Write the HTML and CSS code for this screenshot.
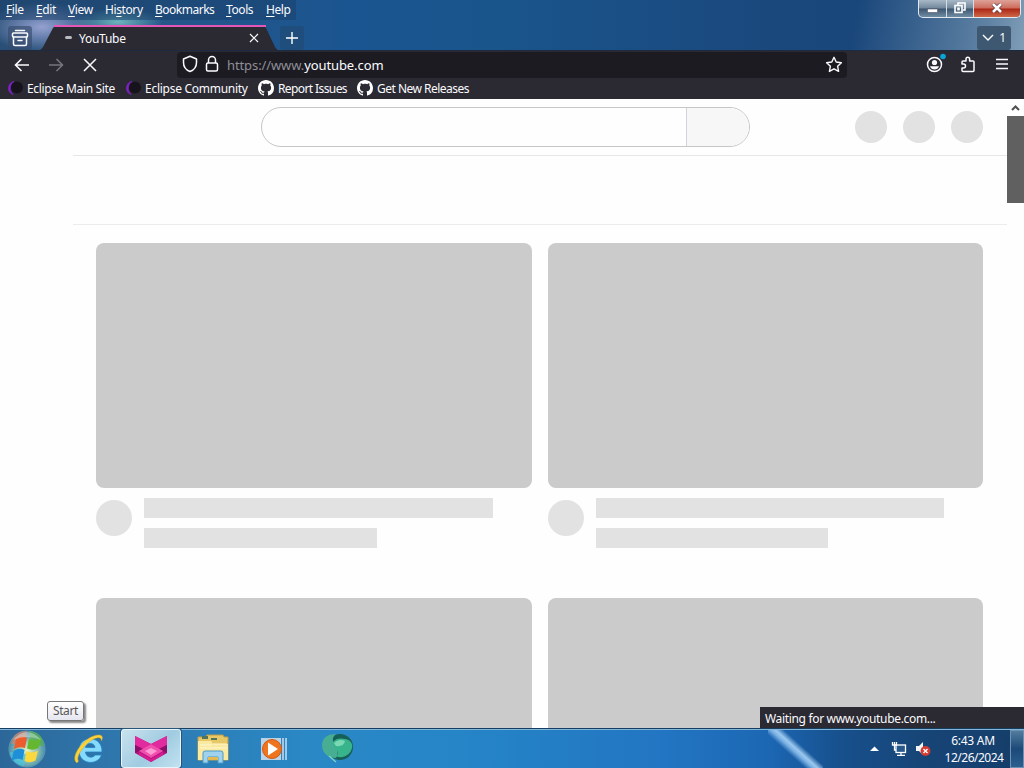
FILE: index.html
```html
<!DOCTYPE html>
<html lang="en">
<head>
<meta charset="UTF-8">
<title>YouTube</title>
<link rel="stylesheet" href="styles.css">
</head>
<body>

<!-- shared icons -->
<svg width="0" height="0" class="defs">
	<symbol id="github" viewBox="0 0 16 16"><path fill="#fff" d="M8 0C3.58 0 0 3.58 0 8c0 3.54 2.29 6.53 5.47 7.59.4.07.55-.17.55-.38 0-.19-.01-.82-.01-1.49-2.01.37-2.53-.49-2.69-.94-.09-.23-.48-.94-.82-1.13-.28-.15-.68-.52-.01-.53.63-.01 1.08.58 1.23.82.72 1.21 1.87.87 2.33.66.07-.52.28-.87.51-1.07-1.78-.2-3.64-.89-3.64-3.95 0-.87.31-1.59.82-2.15-.08-.2-.36-1.02.08-2.12 0 0 .67-.21 2.2.82.64-.18 1.32-.27 2-.27s1.36.09 2 .27c1.53-1.04 2.2-.82 2.2-.82.44 1.1.16 1.92.08 2.12.51.56.82 1.27.82 2.15 0 3.07-1.87 3.75-3.65 3.95.29.25.54.73.54 1.48 0 1.07-.01 1.93-.01 2.2 0 .21.15.46.55.38A8 8 0 0 0 16 8c0-4.42-3.58-8-8-8z"/></symbol>
	<symbol id="eclipse" viewBox="0 0 16 16"><path d="M7 1.500A6.800 6.800 0 0 0 6 14.500 8 8 0 0 1 7 1.500z" fill="#8a22cf" stroke="#7a1fc0"/><circle cx="10" cy="7.600" r="6" fill="#17131d"/></symbol>
</svg>

<div id="titlebar">
	<div class="menu">
		<span class="m1"><u>F</u>ile</span>
		<span class="m2"><u>E</u>dit</span>
		<span class="m3"><u>V</u>iew</span>
		<span class="m4">Hi<u>s</u>tory</span>
		<span class="m5"><u>B</u>ookmarks</span>
		<span class="m6"><u>T</u>ools</span>
		<span class="m7"><u>H</u>elp</span>
	</div>
	<div class="winbtns">
		<span class="wbtn min"><svg width="11" height="6"><rect x=".5" y="1" width="10" height="3.5" fill="#fff" stroke="#556" stroke-width=".6"/></svg></span>
		<span class="wbtn max"><svg width="12" height="12" fill="none" stroke="#fff" stroke-width="1.6"><path d="M4 3V1h7v7H9"/><rect x="1" y="3.5" width="7" height="7"/><rect x="3.6" y="6" width="1.8" height="2" stroke-width=".8"/></svg></span>
		<span class="wbtn close"><svg width="12" height="10"><path d="M2 1l8 8M10 1L2 9" stroke="#5d3038" stroke-width="4"/><path d="M2 1l8 8M10 1L2 9" stroke="#fff" stroke-width="2.6"/></svg></span>
	</div>
	<div class="tabs">
		<div class="tabbtn view"><svg width="18" height="18" fill="none" stroke="#fbfbfe" stroke-width="1.5"><path d="M4.500 1.500h9" stroke-linecap="round"/><rect x="1.500" y="4" width="15" height="4" rx="1"/><path d="M2.500 8v7q0 1.500 1.500 1.500h10q1.500 0 1.500-1.500V8M7 11.500h4" stroke-linecap="round"/></svg></div>
		<div class="tab">
			<svg class="tabshape" width="232" height="25"><path d="M0 25Q2 24 3 22L13 3Q14 1 17 1H222Q225 1 226 3L235 22Q236 24 238 25Z" fill="#2b2a33"/><path d="M14 1H226" stroke="#e456b7" stroke-width="2"/></svg>
			<i class="spin"></i><span class="tabname">YouTube</span>
			<svg class="tabclose" width="10" height="10"><path d="M1 1l8 8M9 1L1 9" stroke="#fbfbfe" stroke-width="1.2"/></svg>
		</div>
		<div class="tabbtn plus"><svg width="14" height="14"><path d="M7 1v12M1 7h12" stroke="#fff" stroke-width="1.4"/></svg></div>
		<div class="tabbtn count"><svg width="12" height="8" fill="none"><path d="M1 1l5 5 5-5" stroke="#fff" stroke-width="1.4"/></svg><span>1</span></div>
	</div>
</div>

<div id="navbar">
	<svg class="back" width="16" height="16" fill="none" stroke="#fbfbfe" stroke-width="1.6"><path d="M15 8H2M7.5 2L1.5 8l6 6"/></svg>
	<svg class="fwd" width="16" height="16" fill="none" stroke="#77767e" stroke-width="1.5"><path d="M1 8h13M8.500 2l6 6-6 6"/></svg>
	<svg class="stop" width="14" height="14"><path d="M1 1l12 12M13 1L1 13" stroke="#fbfbfe" stroke-width="1.5"/></svg>
	<div class="urlbar">
		<svg class="shield" width="16" height="18" fill="none" stroke="#fbfbfe" stroke-width="1.5"><path d="M8 1.2L14.500 4v3.500c0 4-2.500 7.500-6.500 9-4-1.500-6.500-5-6.500-9V4z" stroke-linejoin="round"/></svg>
		<svg class="lock" width="14" height="18" fill="none" stroke="#fbfbfe" stroke-width="1.5"><rect x="1.500" y="8" width="11" height="8" rx="1.500"/><path d="M3.500 8V5a3.500 3.500 0 0 1 7 0v3"/></svg>
		<span class="url"><span class="dim">https://www.</span>youtube.com</span>
		<svg class="star" width="18" height="17" fill="none" stroke="#fbfbfe" stroke-width="1.4"><path d="M9 1.300l2.200 4.700 5.200.7-3.800 3.500 1 5.200L9 12.800l-4.600 2.600 1-5.200L1.600 6.700l5.200-.7z" stroke-linejoin="round"/></svg>
	</div>
	<svg class="account" width="20" height="20"><circle cx="8.500" cy="11.500" r="7" fill="none" stroke="#fbfbfe" stroke-width="1.500"/><circle cx="8.500" cy="9.500" r="2.600" fill="#fbfbfe"/><path d="M4 13.300h9q-1.300 3.300-4.500 3.300T4 13.300z" fill="#fbfbfe"/><circle cx="17" cy="3.500" r="2.800" fill="#0aa5d8"/></svg>
	<svg class="ext" width="16" height="17" fill="none" stroke="#fbfbfe" stroke-width="1.500"><path d="M2 8V6q0-1 1-1h3V3q0-1.800 1.800-1.800T9.600 3v2H13q1 0 1 1v8.500q0 1-1 1H3q-1 0-1-1V12h1.500q2 0 2-2t-2-2z" stroke-linejoin="round"/></svg>
	<svg class="burger" width="12" height="12"><path d="M0 1.500h12M0 6h12M0 10.500h12" stroke="#fbfbfe" stroke-width="1.300"/></svg>
</div>

<div id="bookmarks">
	<div class="bm b1"><svg width="16" height="16"><use href="#eclipse"/></svg><span>Eclipse Main Site</span></div>
	<div class="bm b2"><svg width="16" height="16"><use href="#eclipse"/></svg><span>Eclipse Community</span></div>
	<div class="bm b3"><svg width="16" height="16"><use href="#github"/></svg><span>Report Issues</span></div>
	<div class="bm b4"><svg width="16" height="16"><use href="#github"/></svg><span>Get New Releases</span></div>
</div>

<div id="content">
	<div class="page">
		<div class="masthead">
			<div class="search"><div class="searchbtn"></div></div>
			<div class="dots"><i></i><i></i><i></i></div>
		</div>
		<div class="chips"></div>
		<div class="grid">
			<div class="card"><div class="thumb"></div><div class="meta"><i></i><div class="lines"><b></b><b class="short"></b></div></div></div>
			<div class="card"><div class="thumb"></div><div class="meta"><i></i><div class="lines"><b></b><b class="short"></b></div></div></div>
			<div class="card"><div class="thumb"></div></div>
			<div class="card"><div class="thumb"></div></div>
		</div>
	</div>
	<div class="scrollbar">
		<svg width="9" height="6"><path d="M1 5l3.500-3.500L8 5" fill="none" stroke="#505050" stroke-width="2"/></svg>
		<div class="thumbbar"></div>
	</div>
	<div class="status">Waiting for www.youtube.com...</div>
	<div class="tooltip">Start</div>
</div>

<div id="taskbar">
	<div class="task start">
		<svg width="42" height="40" viewBox="0 0 42 40">
			<defs><radialGradient id="orb" cx=".5" cy=".55" r=".55"><stop offset="0" stop-color="#e8f3c0"/><stop offset=".6" stop-color="#7fb7b0"/><stop offset="1" stop-color="#3a83ab"/></radialGradient></defs>
			<circle cx="21" cy="20" r="18" fill="url(#orb)" stroke="#5b98b4"/>
			<path d="M5 15Q7 2 21 2l-2 12z" fill="#e9805c" opacity=".6"/>
			<path d="M23 2q14 1 15 15l-13-1z" fill="#55b148" opacity=".7"/>
			<path d="M4 23q1 12 14 14l2-12z" fill="#45c6e2" opacity=".7"/>
			<path d="M10 10q6-4 11-1l-2 10q-6-2-11 1z" fill="#ec5c2c"/>
			<path d="M23 10q6 3 12-1l-2.500 10q-6 3-11.500.500z" fill="#64b82f"/>
			<path d="M7.500 22q6-4 11-1l-2 10q-6-3-11 1z" fill="#1f90d8"/>
			<path d="M20.500 22q6 3 11.500-.500l-2.500 10q-6 3-11 .500z" fill="#fbd83e"/>
			<path d="M7 11Q21-5 35 11 21 5 7 11z" fill="#fff" opacity=".35"/>
		</svg>
	</div>
	<div class="task ie">
		<svg width="34" height="34" viewBox="0 0 34 34">
			<path fill-rule="evenodd" d="M30 20H13.500c.5 6 7.500 6.500 9.500 3h6.500C26 34 7 33 7 18.500 7 2 31 3 30 20zM13.500 15.500H23c-.5-5.500-9-5.500-9.500 0z" fill="#86dafb" stroke="#2183c4" stroke-width=".8"/>
			<path d="M5 31C-3 26 12 4 26 3c5-.5 5 3 3.500 6 0-3-2-4-5-3C14 9 3 25 6.500 29z" fill="#f8d33b" stroke="#cf9f2a" stroke-width=".5"/>
		</svg>
	</div>
	<div class="task active">
		<svg width="34" height="28" viewBox="0 0 34 28">
			<path d="M1 1l16 8L33 1v17L17 27 1 18z" fill="#b3127d"/>
			<path d="M1 1l16 8-8 5-8-4zM33 1L17 9l8 5 8-4z" fill="#e02a9d"/>
			<path d="M1 10l8 4-8 4zM33 10l-8 4 8 4z" fill="#8d0e68"/>
			<path d="M17 9l12 7-12 7-12-7z" fill="#f04fae"/>
			<path d="M17 13l6 3-6 4-6-4z" fill="#ff9ad5"/>
			<path d="M5 17l12 7 12-7v3l-12 7-12-7z" fill="#d51d91"/>
		</svg>
	</div>
	<div class="task folder">
		<svg width="34" height="30" viewBox="0 0 34 30">
			<path d="M2 3h8l1-2h16l1 2h4v23H2z" fill="#e7c866" stroke="#c19d43"/>
			<path d="M6 2h6v3H6zM15 4h6v2h-6z" fill="#55725b"/>
			<path d="M2 7h13l2 3h15v16H2z" fill="#fae9a0"/>
			<path d="M17 10h14M4 11h12M4 14h27" stroke="#fff8d1"/>
			<path d="M7 29V19q0-2 2-2h16q2 0 2 2v10h-5v-6H12v6z" fill="#9fd2ed" stroke="#4d9bc8"/>
			<path d="M12 23h10v3H12z" fill="#e4b94f"/>
		</svg>
	</div>
	<div class="task player">
		<svg width="28" height="26" viewBox="0 0 28 26">
			<rect x="1" y="2" width="20" height="22" fill="#bcd3e6"/><path d="M23 2v22M26 2v22" stroke="#c9def3" stroke-width="1.500"/>
			<circle cx="12" cy="13" r="9.500" fill="#ef741e" stroke="#d15a15"/><path d="M8 6.500L18 13 8 19.500z" fill="#fff"/>
		</svg>
	</div>
	<div class="task swirl">
		<svg width="34" height="32" viewBox="0 0 34 32">
			<circle cx="19" cy="14" r="13" fill="#176058"/>
			<path d="M1 12C1 4 8 1 15 1c-4 3-4 7-1 11 4 5 3 9 1 13C6 25 1 19 1 12z" fill="#48ae93"/>
			<path d="M12 9c3-4 8-4 12-3 6 1 8 5 7 9-2 8-10 11-17 8 4-1 4-4 1-7-3-2-4-4-3-7z" fill="#38b48d"/>
			<path d="M13 10q5-5 11-2-1 6-9 5z" fill="#7bd8b4"/><path d="M8 23l7 6" stroke="#7bd0c8" stroke-width="1.500"/>
		</svg>
	</div>
	<div class="tray">
		<svg class="up" width="9" height="5"><path d="M0 5l4.500-4.500L9 5z" fill="#fff"/></svg>
		<svg class="net" width="16" height="16" fill="none" stroke="#fff" stroke-width="1.300"><rect x="5" y="4" width="9.500" height="7.500" fill="#27598c"/><path d="M1.500 1v3h4V1M3.500 1v8H5M10 12v2M6 14.300h8"/></svg>
		<svg class="vol" width="16" height="16"><path d="M1 5h3l4-4v13l-4-4H1z" fill="#f2f5f8"/><circle cx="10.500" cy="10" r="5" fill="#d33a30"/><path d="M8.500 8l4 4M12.500 8l-4 4" stroke="#fff" stroke-width="1.400"/></svg>
		<div class="clock"><div class="time">6:43 AM</div><div class="date">12/26/2024</div></div>
		<div class="peek"></div>
	</div>
</div>

</body>
</html>
```
FILE: styles.css
```css
* {
	box-sizing: border-box;
}

body {
	margin: 0;
	width: 1024px;
	height: 768px;
	overflow: hidden;
	font: 12px/16px "Noto Sans", "Open Sans", sans-serif;
	letter-spacing: -.4px;
	color: #fbfbfe;
	display: flex;
	flex-direction: column;
}

svg {
	display: block;
	flex: none;
}

.defs {
	position: absolute;
}

/* title bar */
#titlebar {
	height: 50px;
	flex: none;
	position: relative;
	background:
		radial-gradient(ellipse 45px 14px at 118px 22px, #6cb5bd, transparent),
		radial-gradient(ellipse 55px 25px at 42px 27px, #94a1d0, transparent),
		linear-gradient(100deg, transparent 83%, #5f82a4 96%, #7f9db6),
		linear-gradient(90deg, #294f76, #255689 15%, #1a5591 35%, #19548a 50%, #1a487d 75%, #164276);
}

.menu {
	width: 296px;
	height: 20px;
	padding: 2px 0 0 6px;
	display: flex;
	background: #173d6880;
	white-space: nowrap;
}

.menu u {
	text-underline-offset: 2px;
}

.m1 { width: 30px; }
.m2 { width: 32px; }
.m3 { width: 37px; }
.m4 { width: 50px; }

.m5 {
	width: 71px;
	letter-spacing: -.5px;
}

.m6 { width: 40px; }

.winbtns {
	position: absolute;
	top: 0;
	right: 3px;
	height: 18px;
	display: flex;
	border: 1px solid #e1e9ef;
	border-top: 0;
	border-radius: 0 0 5px 5px;
	overflow: hidden;
	background: linear-gradient(#a8b8c7, #71879b 48%, #3c566f 52%, #708da4);
}

.wbtn {
	width: 28px;
	display: flex;
	align-items: center;
	justify-content: center;
	border-right: 1px solid #d5dde4;
}

.min { padding-top: 4px; }

.max {
	width: 27px;
	padding-bottom: 2px;
}

.close {
	width: 46px;
	border: 0;
	padding-bottom: 2px;
	background: linear-gradient(#dea298, #cc6c5b 48%, #ac2716 52%, #ce6848);
}

.tabs {
	display: flex;
	height: 30px;
	padding: 6px 13px 0 8px;
}

.tabbtn {
	height: 24px;
	width: 24px;
	border-radius: 3px;
	background: #23446770;
	display: flex;
	align-items: center;
	justify-content: center;
}

.view { background: #34496aa0; }

.tab {
	width: 236px;
	height: 25px;
	margin: -1px 0 0 8px;
	position: relative;
	display: flex;
	align-items: center;
}

.tabshape {
	position: absolute;
	left: 0;
	top: 0;
	overflow: visible;
}

.spin {
	position: relative;
	width: 7px;
	height: 3px;
	margin-left: 25px;
	border-radius: 2px;
	background: #b9b9c0;
}

.tabname {
	position: relative;
	margin-left: 7px;
	width: 170px;
	padding-top: 2px;
	letter-spacing: -.25px;
}

.tabclose { position: relative; }

.plus { margin-left: 4px; }

.count {
	width: 34px;
	margin-left: auto;
	gap: 5px;
	background: #3d5870;
}

/* toolbar */
#navbar {
	height: 29px;
	flex: none;
	display: flex;
	align-items: center;
	padding: 0 16px 0 14px;
	background: #2b2a33;
	border-top: 1px solid #1c2a42;
}

#navbar > .back,
#navbar > .fwd,
#navbar > .stop {
	margin-top: -1px;
}

.fwd { margin-left: 18px; }
.stop { margin-left: 19px; }

.urlbar {
	width: 670px;
	height: 26px;
	margin-left: 80px;
	padding: 0 4px 2px 5px;
	border-radius: 4px;
	background: #1c1b22;
	display: flex;
	align-items: center;
}

.lock { margin-left: 7px; }

.url {
	font-size: 13px;
	margin-left: 8px;
	letter-spacing: -.1px;
	padding-top: 2px;
}

.dim { color: #8f8e96; }
.star { margin-left: auto; }
.account { margin: -5px 0 0 79px; }
.ext { margin: -2px 0 0 14px; }
.burger { margin: -2px 0 0 auto; }

#bookmarks {
	height: 20px;
	flex: none;
	display: flex;
	background: #2b2a33;
	padding-left: 7px;
	white-space: nowrap;
}

.bm {
	display: flex;
	gap: 4px;
	padding-top: 1px;
}

.bm span { padding-top: 1px; }

.b1 {
	width: 118px;
	letter-spacing: -.33px;
}

.b2 {
	width: 133px;
	letter-spacing: -.27px;
}

.b3 {
	width: 99px;
	letter-spacing: -.6px;
}

.b4 { letter-spacing: -.52px; }

/* page */
#content {
	height: 629px;
	flex: none;
	display: flex;
	position: relative;
	overflow: hidden;
	background: #fefefe;
}

.page { width: 1007px; }

.masthead {
	height: 57px;
	margin-left: 73px;
	padding: 8px 24px 0 188px;
	border-bottom: 1px solid #e7e7e7;
	display: flex;
	justify-content: space-between;
}

.search {
	width: 489px;
	height: 40px;
	border: 1px solid #c6c6c6;
	border-radius: 20px;
	display: flex;
	justify-content: flex-end;
	overflow: hidden;
}

.searchbtn {
	width: 63px;
	border-left: 1px solid #d0d3d8;
	background: #f7f7f7;
}

.dots {
	display: flex;
	gap: 16px;
	padding-top: 4px;
}

.dots i {
	width: 32px;
	height: 32px;
	border-radius: 50%;
	background: #e2e2e2;
}

.chips {
	height: 69px;
	margin-left: 73px;
	border-bottom: 1px solid #ececec;
}

.grid {
	padding: 18px 24px 0 96px;
	display: grid;
	grid-template-columns: 436px 435px;
	grid-auto-rows: 355px;
	column-gap: 16px;
}

.thumb {
	height: 245px;
	border-radius: 8px;
	background: #cbcbcb;
}

.meta {
	display: flex;
	gap: 12px;
	padding-top: 10px;
}

.meta i {
	width: 36px;
	height: 36px;
	margin-top: 2px;
	border-radius: 50%;
	background: #e2e2e2;
}

.lines { width: 388px; }

.lines b {
	display: block;
	width: 90%;
	height: 20px;
	margin-bottom: 10px;
	background: #e2e2e2;
}

.lines .short { width: 60%; }

.scrollbar {
	width: 17px;
	padding-top: 6px;
}

.scrollbar svg { margin-left: 4px; }

.thumbbar {
	height: 87px;
	margin-top: 5px;
	background: #606060;
}

.status {
	position: absolute;
	right: 0;
	bottom: 0;
	width: 264px;
	height: 21px;
	padding: 4px 5px;
	letter-spacing: -.33px;
	background: #2b2a33;
}

.tooltip {
	position: absolute;
	left: 47px;
	bottom: 7px;
	width: 37px;
	height: 20px;
	padding: 1px 0 0 5px;
	border: 1px solid #777;
	border-radius: 3px;
	background: linear-gradient(#fff, #e5e5ef);
	box-shadow: 2px 2px 2px #0007;
	color: #575757;
}

/* taskbar */
#taskbar {
	height: 40px;
	flex: none;
	display: flex;
	border-top: 1px solid #153e62;
	box-shadow: inset 0 1px #82b6d8;
	background: linear-gradient(90deg, #2d6799, #2e78ae 12%, #2a88c5 30%, #2585c7 45%, #2275c2 65%, #1c67b4 75%, #17508d 82%, #174577 90%, #153d69);
	position: relative;
}

/* light streak of the wallpaper showing through */
#taskbar::before {
	content: "";
	position: absolute;
	left: 768px;
	top: 1px;
	width: 55px;
	height: 38px;
	background: linear-gradient(42deg, transparent 38%, #78b0e4 46%, #9cc8ee 51%, transparent 60%);
}

.task {
	display: flex;
	align-items: center;
	justify-content: center;
	flex: none;
}

.start { width: 54px; }
.ie { width: 67px; padding-left: 2px; }

.active {
	width: 60px;
	height: 39px;
	border: 1px solid #e6f5fb;
	border-radius: 3px;
	background: linear-gradient(135deg, #c9e2ed, #a0cbe1 55%, #c1e2f0);
	box-shadow: 0 0 0 1px #28567a;
}

.folder { width: 64px; }
.player { width: 58px; }
.swirl { width: 69px; }

.tray {
	margin-left: auto;
	display: flex;
	align-items: center;
	height: 39px;
}

.net { margin-left: 12px; }
.vol { margin-left: 8px; }

.clock {
	width: 66px;
	margin-left: 10px;
	text-align: center;
	line-height: 17px;
	white-space: nowrap;
}

.time {
	padding-right: 2px;
	letter-spacing: -.25px;
}

.date { letter-spacing: -.5px; }

.peek {
	width: 14px;
	height: 38px;
	margin-left: 3px;
	border: 1px solid #6c91b2;
	background: linear-gradient(#527c9e, #1c4978 50%, #2a6090);
}
```
